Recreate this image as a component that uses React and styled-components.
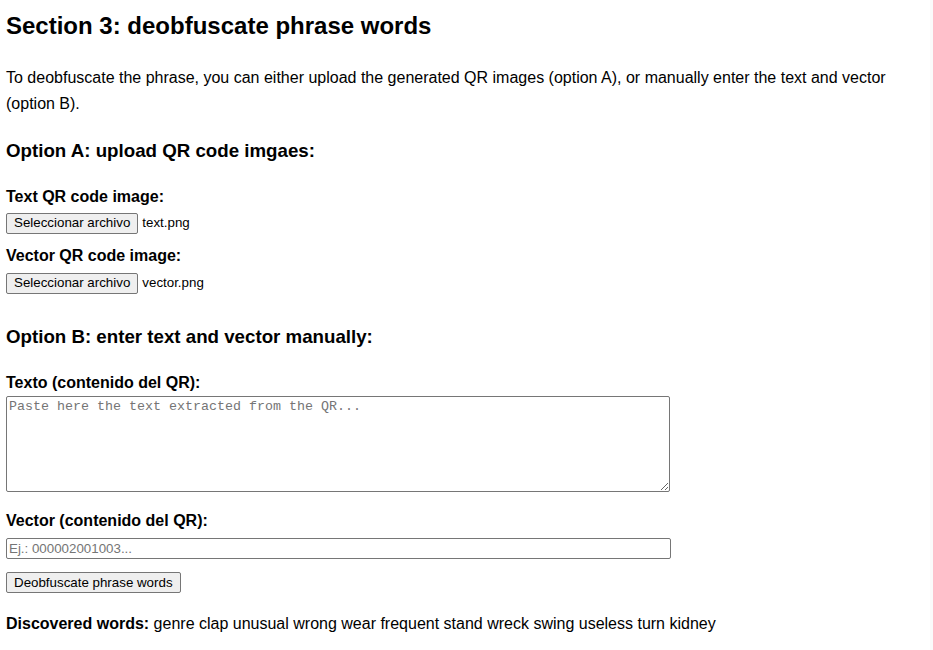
import React from "react"
import styled, { createGlobalStyle } from "styled-components"

const words = [
  "genre", "clap", "unusual", "wrong", "wear", "frequent",
  "stand", "wreck", "swing", "useless", "turn", "kidney",
]

const GlobalStyle = createGlobalStyle`
  html {
    background: #fafafa;
  }
  body {
    margin: 0;
    font-family: "Liberation Sans", Arial, sans-serif;
    font-size: 16px;
    line-height: 1.6;
    color: #000;
  }
`

class App extends React.Component {
  render () {
    return (
      <Page>
        <GlobalStyle />
        <Title>Section 3: deobfuscate phrase words</Title>

        <Intro>
          To deobfuscate the phrase, you can either upload the generated QR
          images (option A), or manually enter the text and vector (option B).
        </Intro>

        <Subtitle top={19}>Option A: upload QR code imgaes:</Subtitle>

        <Label top={18}>Text QR code image:</Label>
        <FileRow top={3}>
          <Button type="button">Seleccionar archivo</Button>
          <FileName>text.png</FileName>
        </FileRow>

        <Label top={10}>Vector QR code image:</Label>
        <FileRow top={4}>
          <Button type="button">Seleccionar archivo</Button>
          <FileName>vector.png</FileName>
        </FileRow>

        <Subtitle top={29}>Option B: enter text and vector manually:</Subtitle>

        <Label top={18}>Texto (contenido del QR):</Label>
        <TextArea placeholder="Paste here the text extracted from the QR..." />

        <Label top={16}>Vector (contenido del QR):</Label>
        <TextInput type="text" placeholder="Ej.: 000002001003..." />

        <Submit>
          <Button type="button">Deobfuscate phrase words</Button>
        </Submit>

        <Result>
          <strong>Discovered words:</strong> {words.join(" ")}
        </Result>
      </Page>
    )
  }
}

const Page = styled.div`
  box-sizing: border-box;
  width: 930px;
  min-height: 650px;
  padding: 7px 6px 0;
  background: #fff;
`

const Title = styled.h2`
  margin: 0;
  font-size: 24px;
  line-height: 38px;
  font-weight: bold;
`

const Intro = styled.p`
  margin: 20px 0 0;
  line-height: 26px;
`

const Subtitle = styled.h3`
  margin: ${(p) => p.top}px 0 0;
  font-size: 18.72px;
  line-height: 30px;
  font-weight: bold;
`

const Label = styled.label`
  display: block;
  margin-top: ${(p) => p.top}px;
  font-weight: bold;
  line-height: 26px;
`

const FileRow = styled.div`
  display: flex;
  align-items: center;
  gap: 4px;
  margin-top: ${(p) => p.top}px;
  height: 20px;
`

const Button = styled.button`
  box-sizing: border-box;
  height: 21px;
  margin: 0;
  padding: 1px 7px;
  font-family: "Liberation Sans", Arial, sans-serif;
  font-size: 13.33px;
  line-height: 16px;
  color: #000;
  background: #efefef;
  border: 1px solid #767676;
  border-radius: 2px;
`

const FileName = styled.span`
  font-size: 13.33px;
  line-height: 16px;
`

const TextArea = styled.textarea`
  display: block;
  box-sizing: border-box;
  width: 664px;
  height: 96px;
  margin: 0;
  padding: 2px;
  font-family: "Liberation Mono", "Courier New", monospace;
  font-size: 13.33px;
  border: 1px solid #767676;
  border-radius: 2px;

  &::placeholder {
    color: #757575;
  }
`

const TextInput = styled.input`
  display: block;
  box-sizing: border-box;
  width: 665px;
  height: 21px;
  margin: 4px 0 0;
  padding: 1px 2px;
  font-family: "Liberation Sans", Arial, sans-serif;
  font-size: 13.33px;
  border: 1px solid #767676;
  border-radius: 2px;

  &::placeholder {
    color: #757575;
  }
`

const Submit = styled.div`
  display: flex;
  margin-top: 13px;
`

const Result = styled.p`
  margin: 18px 0 0;
  line-height: 26px;
`

export default App
